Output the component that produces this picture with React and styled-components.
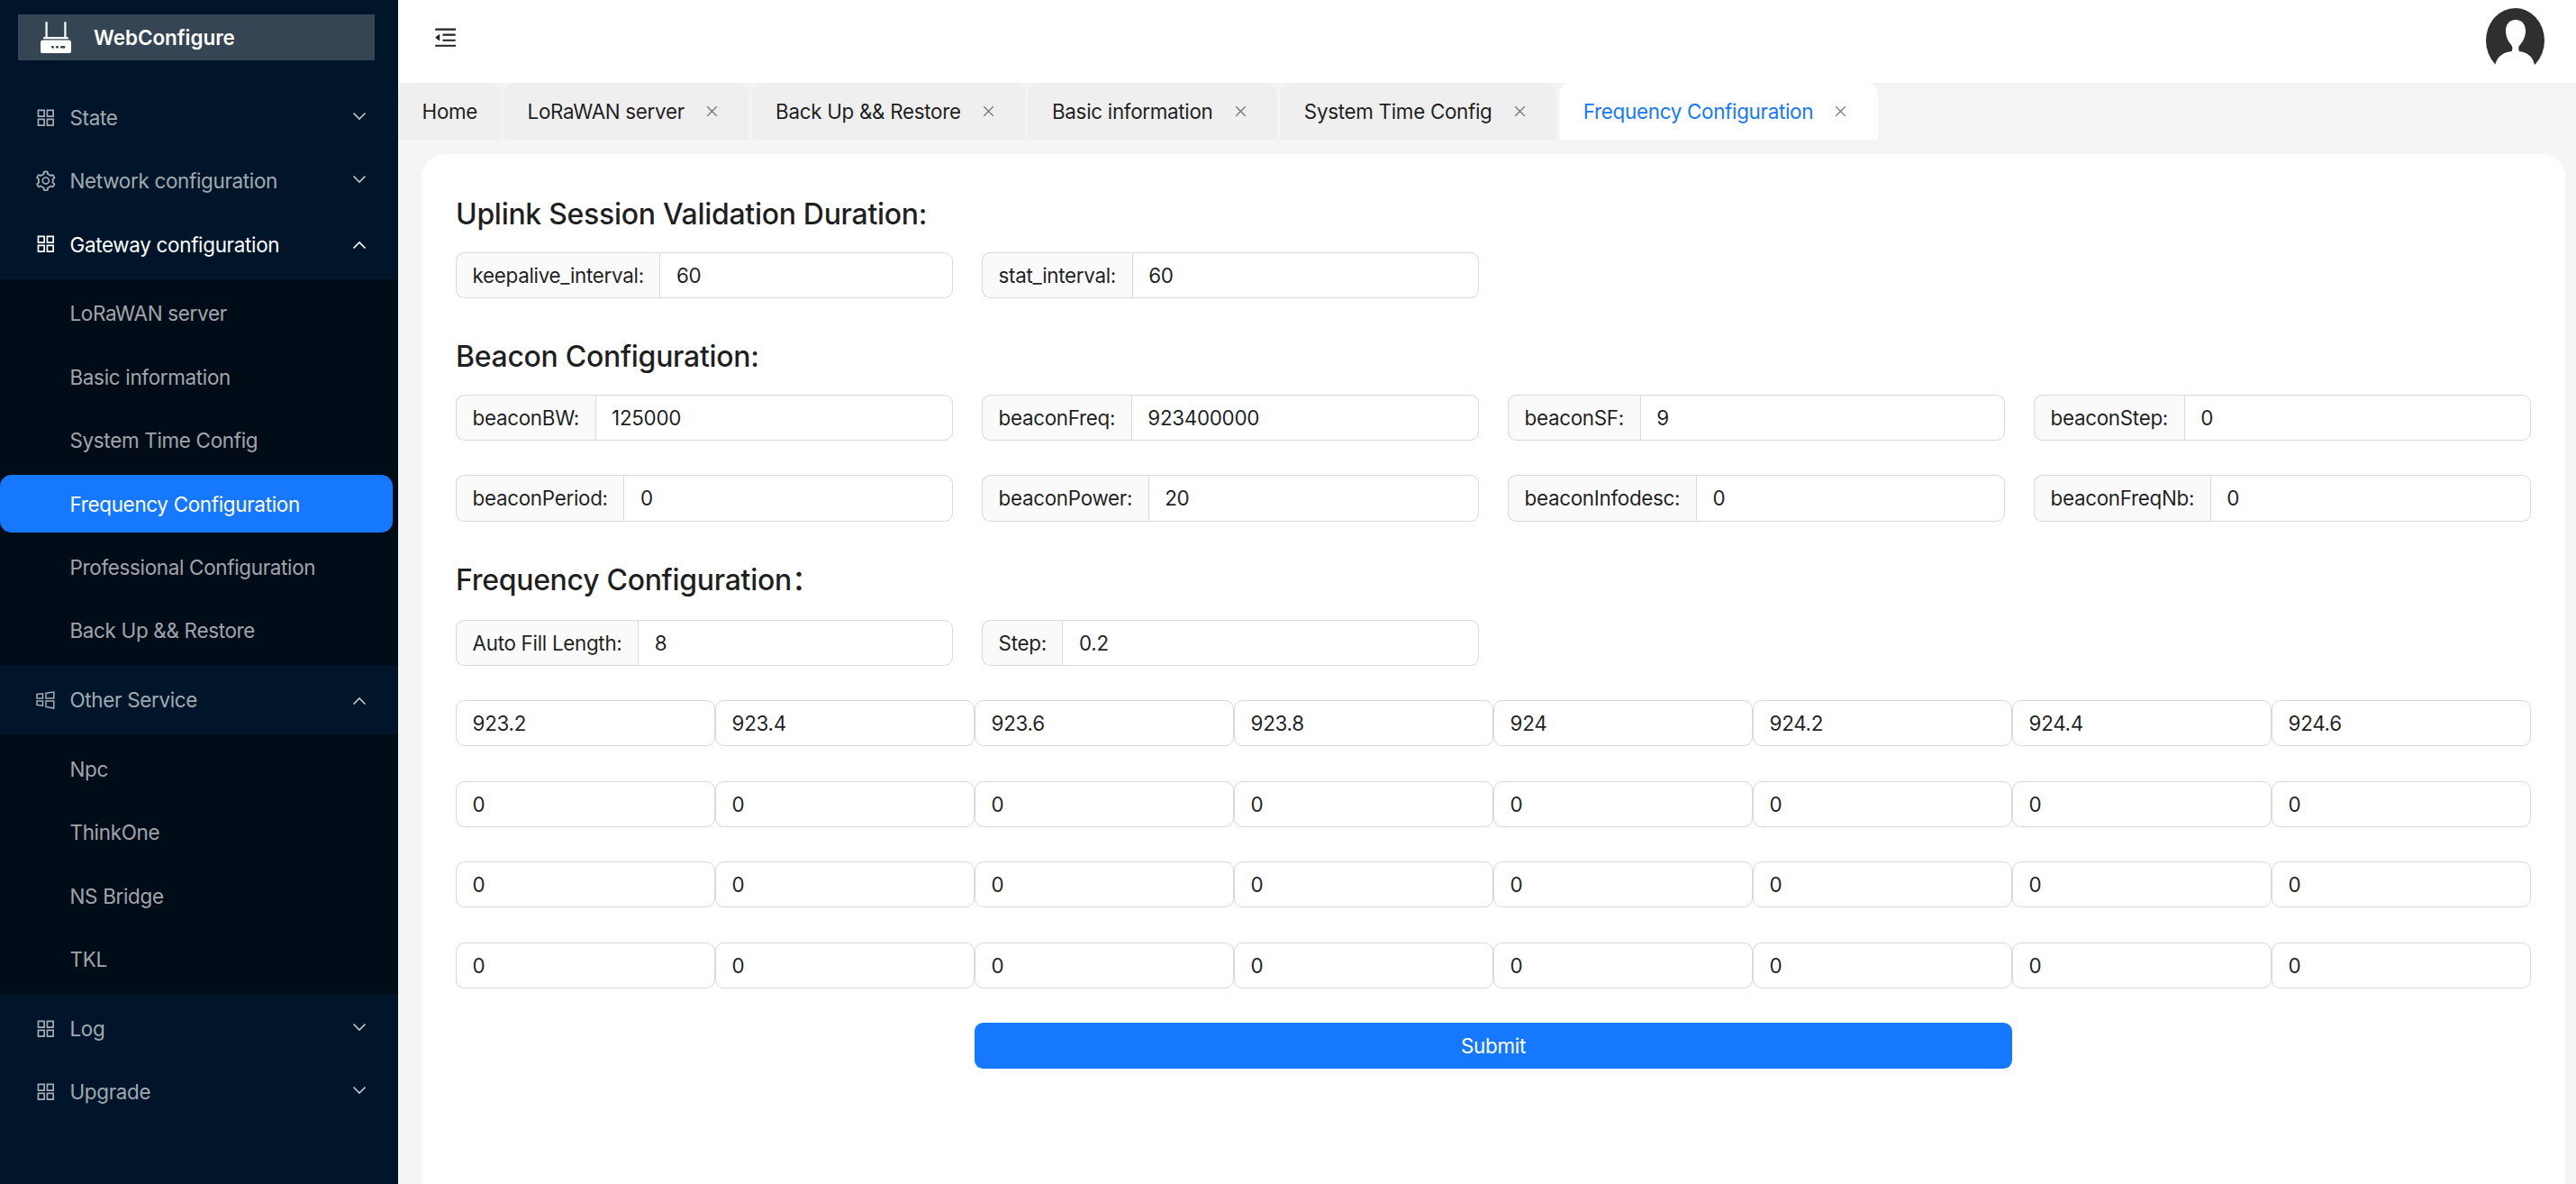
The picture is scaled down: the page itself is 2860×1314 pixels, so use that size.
import React from 'react';
import styled, { createGlobalStyle } from 'styled-components';
import { AiOutlineAppstore, AiOutlineSetting, AiOutlineMenuFold, AiOutlineClose } from 'react-icons/ai';

const GlobalStyle = createGlobalStyle`
  html, body { margin: 0; padding: 0; height: 100%; }
  body {
    font-family: Inter, "Noto Sans CJK SC", sans-serif;
    font-size: 22.4px;
    letter-spacing: -0.3px;
    color: rgba(0, 0, 0, 0.88);
    background: #f5f5f5;
    overflow: hidden;
  }
  * { box-sizing: border-box; }
`;

const MENU = [
  { label: 'State', icon: 'grid' },
  { label: 'Network configuration', icon: 'gear' },
  {
    label: 'Gateway configuration',
    icon: 'grid',
    active: true,
    children: ['LoRaWAN server', 'Basic information', 'System Time Config', 'Frequency Configuration', 'Professional Configuration', 'Back Up && Restore'],
  },
  { label: 'Other Service', icon: 'windows', children: ['Npc', 'ThinkOne', 'NS Bridge', 'TKL'] },
  { label: 'Log', icon: 'grid' },
  { label: 'Upgrade', icon: 'grid' },
];

const TABS = [
  { label: 'Home', fixed: true },
  { label: 'LoRaWAN server' },
  { label: 'Back Up && Restore' },
  { label: 'Basic information' },
  { label: 'System Time Config' },
  { label: 'Frequency Configuration', active: true },
];

const FREQS = [
  ['923.2', '923.4', '923.6', '923.8', '924', '924.2', '924.4', '924.6'],
  ['0', '0', '0', '0', '0', '0', '0', '0'],
  ['0', '0', '0', '0', '0', '0', '0', '0'],
  ['0', '0', '0', '0', '0', '0', '0', '0'],
];

const Layout = styled.div`
  display: grid;
  grid-template-columns: 442px 1fr;
  height: 100vh;
  overflow: hidden;
`;

const Sider = styled.aside`
  background: #001529;
  display: flow-root;
`;

const Logo = styled.div`
  display: flex;
  align-items: center;
  gap: 25px;
  height: 51px;
  margin: 16px 26px 25px 20px;
  padding-left: 25px;
  background: #354554;
  color: #fff;
  font-weight: 600;
  font-size: 22.4px;
  letter-spacing: 0;
`;

const Menu = styled.ul`
  list-style: none;
  margin: 0;
  padding: 0;
  display: flow-root;
`;

const Title = styled.div`
  display: flex;
  align-items: center;
  height: 64px;
  margin: 6.4px 0;
  padding: 0 35px 0 39.5px;
  color: ${(p) => (p.$active ? '#fff' : 'rgba(255, 255, 255, 0.65)')};
`;

const TitleIcon = styled.span`
  display: flex;
  flex: none;
  width: 22px;
  margin-right: 16px;
  font-size: 25.6px;
  justify-content: center;
  svg { flex: none; }
`;

const TitleText = styled.span`
  flex: 1;
`;

const Arrow = styled.svg`
  display: block;
  margin-top: ${(p) => (p.$up ? '2px' : '-3px')};
`;

const SubMenu = styled.ul`
  list-style: none;
  margin: 0;
  padding: 0;
  background: #000c17;
  display: flow-root;
`;

const SubItem = styled.li`
  display: flex;
  align-items: center;
  height: 64px;
  margin: 6.4px 6.4px 6.4px 0;
  padding-left: 77.5px;
  border-radius: 12.8px;
  background: ${(p) => (p.$active ? '#1677ff' : 'transparent')};
  color: ${(p) => (p.$active ? '#fff' : 'rgba(255, 255, 255, 0.65)')};
`;

const Main = styled.main`
  display: flex;
  flex-direction: column;
  min-width: 0;
`;

const Header = styled.header`
  display: flex;
  align-items: flex-start;
  justify-content: space-between;
  height: 92px;
  padding: 0 35px 0 38px;
  background: #fff;
`;

const FoldButton = styled.span`
  display: flex;
  margin-top: 27px;
  font-size: 29.3px;
  color: #222;
`;

const Avatar = styled.svg`
  display: block;
  margin-top: 9px;
`;

const TabBar = styled.div`
  display: flex;
  gap: 3.2px;
  height: 63px;
  background: #f4f4f4;
  border-bottom: 1.6px solid #efefef;
`;

const Tab = styled.div`
  display: flex;
  align-items: center;
  height: 63px;
  padding: 0 ${(p) => (p.$fixed ? '25.6px' : '32.5px')} 0 26.6px;
  border-radius: 12.8px 12.8px 0 0;
  background: ${(p) => (p.$active ? '#fff' : '#efefef')};
  color: ${(p) => (p.$active ? '#1677ff' : 'rgba(0, 0, 0, 0.88)')};
`;

const TabClose = styled.span`
  display: flex;
  margin-left: 22px;
  font-size: 17px;
  color: rgba(0, 0, 0, 0.5);
`;

const Content = styled.div`
  flex: 1;
  margin: 16px 12px 0 26px;
  padding: 43px 38px 0;
  background: #fff;
  border-radius: 25.6px 25.6px 0 0;
`;

const Heading = styled.h2`
  margin: 0 0 ${(p) => (p.$tall ? '21.6px' : '19px')};
  padding-top: 2px;
  font-size: 32px;
  font-weight: 500;
  line-height: 44.8px;
  color: rgba(0, 0, 0, 0.88);
`;

const Row = styled.div`
  display: grid;
  grid-template-columns: repeat(4, 1fr);
  gap: 38.4px 32px;
  margin-bottom: ${(p) => (p.$beforeGrid ? '37.8px' : '41px')};
`;

const FreqGrid = styled.div`
  display: grid;
  grid-template-columns: repeat(8, 1fr);
  row-gap: 38.4px;
  margin-bottom: 38px;
`;

const Group = styled.div`
  display: flex;
  height: 51.2px;
`;

const Addon = styled.span`
  display: flex;
  align-items: center;
  padding: 0 17.6px;
  background: #fafafa;
  border: 1.6px solid #d9d9d9;
  border-right: 0;
  border-radius: 9.6px 0 0 9.6px;
  white-space: nowrap;
`;

const Input = styled.input`
  width: 100%;
  min-width: 0;
  height: 51.2px;
  padding: 0 17.6px;
  font: inherit;
  letter-spacing: inherit;
  color: inherit;
  background: #fff;
  border: 1.6px solid #d9d9d9;
  border-radius: ${(p) => (p.$grouped ? '0 9.6px 9.6px 0' : '9.6px')};
  outline: none;
`;

const SubmitRow = styled.div`
  display: flex;
  justify-content: center;
`;

const Submit = styled.button`
  width: 1152px;
  height: 51.2px;
  border: 0;
  border-radius: 9.6px;
  background: #1677ff;
  color: #fff;
  font: inherit;
  letter-spacing: inherit;
`;

const Chevron = ({ up, active }) => (
  <Arrow $up={up} width="16" height="10" viewBox="0 0 16 10" fill="none" stroke={active ? '#fff' : 'rgba(255,255,255,0.75)'} strokeWidth="1.7">
    <path d={up ? 'M1.5 8.5 8 2l6.5 6.5' : 'M1.5 1.5 8 8l6.5-6.5'} />
  </Arrow>
);

const WindowsIcon = () => (
  <svg width="21" height="20" viewBox="0 0 21 20" fill="none" stroke="currentColor" strokeWidth="1.5">
    <path d="M1 3.5 7.5 2.8V8H1zM1 11h6.5v5.2L1 15.3zM11 2.3 19.8 1v7H11zM11 11h8.8v8L11 17.4z" />
  </svg>
);

const RouterLogo = () => (
  <svg width="34" height="35" viewBox="0 0 34 35" fill="#fff">
    <rect x="5.5" y="0" width="2.2" height="18" rx="1" />
    <rect x="26.3" y="0" width="2.2" height="18" rx="1" />
    <rect x="3" y="17" width="28" height="2.2" rx="1" />
    <path d="M2.5 20.6h29c1.5 0 2.5 1 2.5 2.5V33c0 1.2-.8 2-2 2H2c-1.2 0-2-.8-2-2v-9.900c0-1.500 1-2.500 2.500-2.500z" />
    <rect x="12" y="27" width="3" height="2.400" rx="1" fill="#354554" />
    <rect x="17" y="27" width="3" height="2.400" rx="1" fill="#354554" />
    <rect x="22" y="27" width="5.500" height="2.400" rx="1" fill="#354554" />
  </svg>
);

const iconFor = (name) => {
  if (name === 'gear') return <AiOutlineSetting />;
  if (name === 'windows') return <WindowsIcon />;
  return <AiOutlineAppstore />;
};

const Field = ({ label, value }) => (
  <Group>
    <Addon>{label}</Addon>
    <Input $grouped defaultValue={value} />
  </Group>
);

const App = () => {
  return (
    <Layout>
      <GlobalStyle />
      <Sider>
        <Logo>
          <RouterLogo />
          WebConfigure
        </Logo>
        <Menu>
          {MENU.map((item) => (
            <li key={item.label}>
              <Title $active={item.active}>
                <TitleIcon>{iconFor(item.icon)}</TitleIcon>
                <TitleText>{item.label}</TitleText>
                <Chevron up={!!item.children} active={item.active} />
              </Title>
              {item.children && (
                <SubMenu>
                  {item.children.map((child) => (
                    <SubItem key={child} $active={child === 'Frequency Configuration'}>{child}</SubItem>
                  ))}
                </SubMenu>
              )}
            </li>
          ))}
        </Menu>
      </Sider>
      <Main>
        <Header>
          <FoldButton><AiOutlineMenuFold /></FoldButton>
          <Avatar width="65" height="63" viewBox="0 0 65 63">
            <ellipse cx="32.500" cy="36" rx="32.500" ry="36" fill="#2f2f2f" />
            <path fill="#fff" d="M33 13c-7 0-11 5.500-11 12 0 7 3 12 5.500 15 2 2.500 2.500 5 1 8-8.500 1-15.800 5-18.300 15H54c-2-10-9-14-17-15-1.400-3-1-5.500 1.500-8 2.500-3 5.500-8 5.500-15 0-6.500-4-12-11-12z" />
          </Avatar>
        </Header>
        <TabBar>
          {TABS.map((tab) => (
            <Tab key={tab.label} $fixed={tab.fixed} $active={tab.active}>
              {tab.label}
              {!tab.fixed && <TabClose><AiOutlineClose /></TabClose>}
            </Tab>
          ))}
        </TabBar>
        <Content>
          <Heading>Uplink Session Validation Duration:</Heading>
          <Row>
            <Field label="keepalive_interval:" value="60" />
            <Field label="stat_interval:" value="60" />
          </Row>
          <Heading>Beacon Configuration:</Heading>
          <Row>
            <Field label="beaconBW:" value="125000" />
            <Field label="beaconFreq:" value="923400000" />
            <Field label="beaconSF:" value="9" />
            <Field label="beaconStep:" value="0" />
            <Field label="beaconPeriod:" value="0" />
            <Field label="beaconPower:" value="20" />
            <Field label="beaconInfodesc:" value="0" />
            <Field label="beaconFreqNb:" value="0" />
          </Row>
          <Heading $tall>Frequency Configuration：</Heading>
          <Row $beforeGrid>
            <Field label="Auto Fill Length:" value="8" />
            <Field label="Step:" value="0.2" />
          </Row>
          <FreqGrid>
            {FREQS.flat().map((value, i) => (
              <Input key={i} defaultValue={value} />
            ))}
          </FreqGrid>
          <SubmitRow>
            <Submit>Submit</Submit>
          </SubmitRow>
        </Content>
      </Main>
    </Layout>
  );
};

export default App;
